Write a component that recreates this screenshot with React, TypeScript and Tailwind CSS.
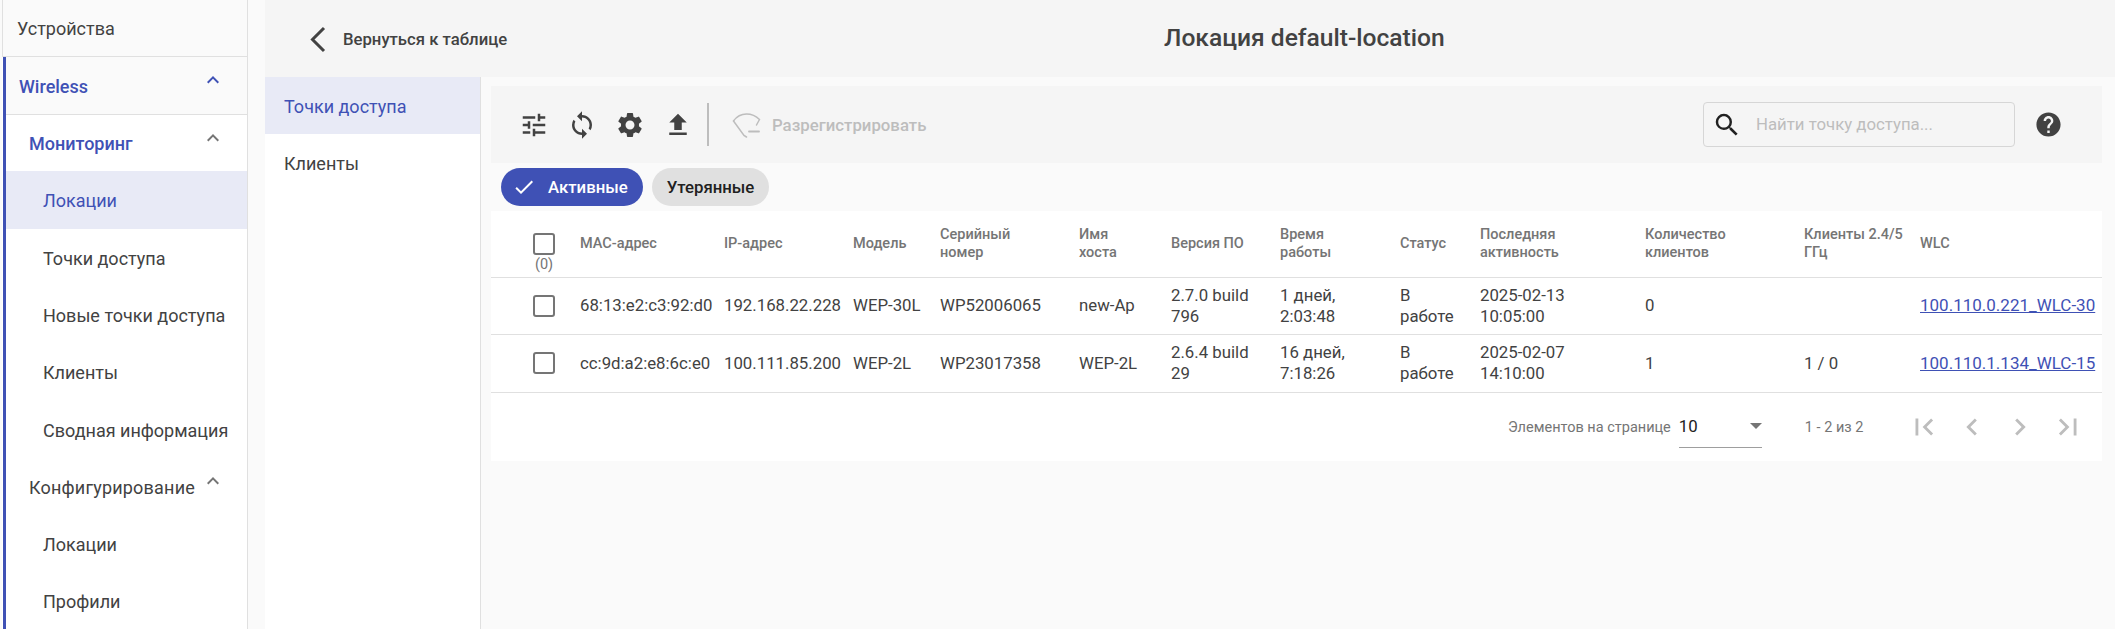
import {
  MdCheck,
  MdChevronLeft,
  MdChevronRight,
  MdFileUpload,
  MdFirstPage,
  MdHelp,
  MdKeyboardArrowUp,
  MdLastPage,
  MdSearch,
  MdSettings,
  MdSync,
  MdTune,
} from 'react-icons/md';

const subItems = ['Точки доступа', 'Новые точки доступа', 'Клиенты', 'Сводная информация'];

const columns = [
  { label: 'МАС-адрес', width: 'w-[144px]' },
  { label: 'IP-адрес', width: 'w-[129px]' },
  { label: 'Модель', width: 'w-[87px]' },
  { label: 'Серийный\nномер', width: 'w-[139px]' },
  { label: 'Имя\nхоста', width: 'w-[92px]' },
  { label: 'Версия ПО', width: 'w-[109px]' },
  { label: 'Время\nработы', width: 'w-[120px]' },
  { label: 'Статус', width: 'w-[80px]' },
  { label: 'Последняя\nактивность', width: 'w-[165px]' },
  { label: 'Количество\nклиентов', width: 'w-[159px]' },
  { label: 'Клиенты 2.4/5\nГГц', width: 'w-[116px]' },
  { label: 'WLC', width: 'w-[182px]' },
];

const rows = [
  ['68:13:e2:c3:92:d0', '192.168.22.228', 'WEP-30L', 'WP52006065', 'new-Ap', '2.7.0 build\n796', '1 дней,\n2:03:48', 'В\nработе', '2025-02-13\n10:05:00', '0', '', '100.110.0.221_WLC-30'],
  ['cc:9d:a2:e8:6c:e0', '100.111.85.200', 'WEP-2L', 'WP23017358', 'WEP-2L', '2.6.4 build\n29', '16 дней,\n7:18:26', 'В\nработе', '2025-02-07\n14:10:00', '1', '1 / 0', '100.110.1.134_WLC-15'],
];

function Checkbox() {
  return <span className="block w-[22px] h-[22px] border-2 border-[#757575] rounded-[3px]" />;
}

function SideChevron({ className }: { className: string }) {
  return <MdKeyboardArrowUp className={`absolute top-[11px] left-[195px] ${className}`} size={24} />;
}

export default function App() {
  return (
    <div className="flex h-[629px] overflow-hidden bg-[#fafafa] font-['Roboto',sans-serif] text-[#424242]">
      {/* Sidebar */}
      <aside className="w-[246px] ml-[2px] shrink-0 bg-white border-r border-[#e0e0e0] text-[18px]">
        <div className="h-[57px] flex items-center pl-[14px] pt-[1px] bg-[#fafafa] border-l border-b border-[#e0e0e0]">Устройства</div>
        <div className="ml-px border-l-[3px] border-[#3f51b5]">
          <div className="relative h-[58px] flex items-center pl-[13px] pt-[1px] bg-[#fafafa] border-b border-[#e0e0e0] font-medium text-[#3f51b5]">
            Wireless
            <SideChevron className="text-[#3f51b5]" />
          </div>
          <div className="relative h-[56px] flex items-center pl-[23px] pt-[1px] font-medium text-[#3f51b5]">
            Мониторинг
            <SideChevron className="text-[#757575]" />
          </div>
          <div className="h-[58px] flex items-center pl-[37px] pt-[1px] bg-[#e8eaf6] text-[#3f51b5]">Локации</div>
          {subItems.map((item) => (
            <div key={item} className="h-[57.3px] flex items-center pl-[37px] pt-[1px] whitespace-nowrap">{item}</div>
          ))}
          <div className="relative h-[57.3px] flex items-center pl-[23px] pt-[1px] tracking-[0.2px]">
            Конфигурирование
            <SideChevron className="text-[#757575]" />
          </div>
          <div className="h-[57.3px] flex items-center pl-[37px] pt-[1px]">Локации</div>
          <div className="h-[57.3px] flex items-center pl-[37px] pt-[1px]">Профили</div>
        </div>
      </aside>

      {/* Main */}
      <main className="flex-1 min-w-0 ml-[17px] flex flex-col">
        <header className="h-[77px] shrink-0 flex items-center bg-[#f5f5f5]">
          <svg className="ml-[44px] mt-[1px]" width="17" height="27" viewBox="0 0 17 27" fill="none" stroke="#424242" strokeWidth="3">
            <path d="M15 2 3.500 13.500 15 25" />
          </svg>
          <span className="ml-[17px] pt-[2px] w-[821px] text-[16.7px] font-medium">Вернуться к таблице</span>
          <h1 className="text-[24.6px] font-medium">Локация default-location</h1>
        </header>

        <div className="flex flex-1 min-h-0">
          <nav className="w-[216px] shrink-0 bg-white border-r border-[#e0e0e0] text-[18px]">
            <div className="h-[57px] flex items-center pl-[19px] pt-[1px] bg-[#e8eaf6] text-[#3f51b5]">Точки доступа</div>
            <div className="h-[58px] flex items-center pl-[19px] pt-[1px]">Клиенты</div>
          </nav>

          <section className="flex-1 min-w-0 ml-[10px] mr-[13px] pt-[9px]">
            {/* Toolbar */}
            <div className="h-[77px] flex items-center pl-[19px] bg-[#f5f5f5]">
              <span className="w-12 flex justify-center"><MdTune size={30} /></span>
              <span className="w-12 flex justify-center"><MdSync size={30} /></span>
              <span className="w-12 flex justify-center"><MdSettings size={30} /></span>
              <span className="w-12 flex justify-center"><MdFileUpload size={30} /></span>
              <span className="ml-[5px] w-[2px] h-[43px] bg-[#bdbdbd]" />
              <svg className="ml-[23px]" width="29" height="26" viewBox="0 0 29 26" fill="none" stroke="#bdbdbd" strokeWidth="1.5" strokeLinecap="round">
                <path d="M1.5 9C5 4 9.5 2 14.5 2c4.500 0 9.500 2 13 5.500L24.500 13" />
                <path d="M1.500 9 12 23.500l2.500 1.500" />
                <path d="M17 19.500h10" strokeWidth="1.800" />
              </svg>
              <span className="ml-[11px] pt-[2px] text-[16.8px] font-medium text-[#bdbdbd]">Разрегистрировать</span>

              <div className="ml-auto w-[312px] h-[45px] flex items-center border border-[#d6d6d6] rounded-[4px]">
                <MdSearch size={30} className="ml-[8px] text-[#212121]" />
                <span className="ml-[14px] text-[16.8px] text-[#bdbdbd]">Найти точку доступа...</span>
              </div>
              <MdHelp size={29} className="ml-[19px] mr-[39px]" />
            </div>

            {/* Chips */}
            <div className="flex gap-[9px] pl-[10px] pt-[5px] pb-[5px]">
              <span className="h-[38px] w-[142px] flex items-center rounded-full bg-[#3f51b5] text-white text-[16.8px] font-medium">
                <MdCheck size={24} className="ml-[11px] mr-[12px]" />
                <span className="pt-[2px]">Активные</span>
              </span>
              <span className="h-[38px] w-[117px] flex items-center justify-center pt-[2px] rounded-full bg-[#e0e0e0] text-[16.8px] font-medium text-[#212121]">Утерянные</span>
            </div>

            {/* Table */}
            <div className="bg-white h-[250px]">
              <table className="table-fixed w-[1611px] border-collapse">
                <colgroup>
                  <col className="w-[89px]" />
                  {columns.map((c) => (
                    <col key={c.label} className={c.width} />
                  ))}
                </colgroup>
                <thead>
                  <tr className="h-[66px] border-b border-[#e0e0e0]">
                    <th className="font-normal align-top pt-[22px]">
                      <div className="pl-[42px] text-[14.5px] leading-[20px] text-[#757575]">
                        <Checkbox />
                        <div className="text-left pl-[2px]">(0)</div>
                      </div>
                    </th>
                    {columns.map((c) => (
                      <th key={c.label} className="text-left align-middle pt-[1px] font-medium text-[14.5px] leading-[18px] text-[#757575] whitespace-pre-line">{c.label}</th>
                    ))}
                  </tr>
                </thead>
                <tbody>
                  {rows.map((row) => (
                    <tr key={row[0]} className="h-[57.5px] border-b border-[#e0e0e0]">
                      <td className="pl-[42px]"><Checkbox /></td>
                      {row.map((cell, i) => (
                        <td key={i} className="text-[16.8px] leading-[21px] whitespace-pre-line">
                          {i === 11 ? <a href="#" className="text-[17px] text-[#3f51b5] underline">{cell}</a> : cell}
                        </td>
                      ))}
                    </tr>
                  ))}
                </tbody>
              </table>

              {/* Pagination */}
              <div className="h-[68px] flex items-center text-[14.5px] text-[#757575]">
                <span className="ml-[1017px] pt-[2px]">Элементов на странице</span>
                <div className="ml-[8px] w-[83px] h-[34px] mt-[8px] pt-[2px] relative border-b border-[#9e9e9e] text-[16.8px] text-[#212121] leading-[20px]">
                  10
                  <span className="absolute right-0 top-[9px] border-x-[6px] border-t-[6px] border-x-transparent border-t-[#757575]" />
                </div>
                <span className="ml-[43px] pt-[2px] w-[95px]">1 - 2 из 2</span>
                <span className="w-12 flex justify-center text-[#bdbdbd]"><MdFirstPage size={34} /></span>
                <span className="w-12 flex justify-center text-[#bdbdbd]"><MdChevronLeft size={34} /></span>
                <span className="w-12 flex justify-center text-[#bdbdbd]"><MdChevronRight size={34} /></span>
                <span className="w-12 flex justify-center text-[#bdbdbd]"><MdLastPage size={34} /></span>
              </div>
            </div>
          </section>
        </div>
      </main>
    </div>
  );
}
